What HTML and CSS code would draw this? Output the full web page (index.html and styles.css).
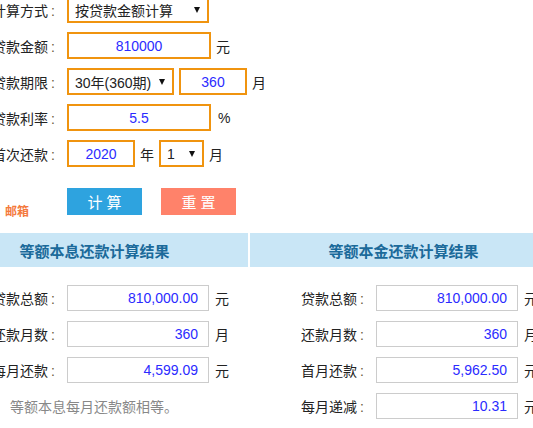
FILE: index.html
```html
<!DOCTYPE html>
<html lang="zh-CN">
<head>
<meta charset="utf-8">
<title>房贷计算器</title>
<link rel="stylesheet" href="styles.css">
</head>
<body>
<div class="page">
  <div class="form">
    <div class="row">
      <span class="label">计算方式<span class="colon">:</span></span>
      <div class="ctl sel w142"><span class="sel-text">按贷款金额计算</span><span class="arrow"></span></div>
    </div>
    <div class="row">
      <span class="label">贷款金额<span class="colon">:</span></span>
      <div class="ctl inp w144">810000</div>
      <span class="unit">元</span>
    </div>
    <div class="row">
      <span class="label">贷款期限<span class="colon">:</span></span>
      <div class="ctl sel w107"><span class="sel-text">30年(360期)</span><span class="arrow"></span></div>
      <div class="ctl inp w68">360</div>
      <span class="unit">月</span>
    </div>
    <div class="row">
      <span class="label">贷款利率<span class="colon">:</span></span>
      <div class="ctl inp w144">5.5</div>
      <span class="unit pct">%</span>
    </div>
    <div class="row">
      <span class="label">首次还款<span class="colon">:</span></span>
      <div class="ctl inp w68">2020</div>
      <span class="unit">年</span>
      <div class="ctl sel w45"><span class="sel-text">1</span><span class="arrow"></span></div>
      <span class="unit">月</span>
    </div>
    <div class="btn-row">
      <span class="mail">邮箱</span>
      <button class="btn btn-calc">计 算</button>
      <button class="btn btn-reset">重 置</button>
    </div>
  </div>

  <div class="results">
    <div class="col">
      <div class="col-head">等额本息还款计算结果</div>
      <div class="rrow">
        <span class="label">贷款总额<span class="colon">:</span></span>
        <div class="out">810,000.00</div>
        <span class="unit">元</span>
      </div>
      <div class="rrow">
        <span class="label">还款月数<span class="colon">:</span></span>
        <div class="out">360</div>
        <span class="unit">月</span>
      </div>
      <div class="rrow">
        <span class="label">每月还款<span class="colon">:</span></span>
        <div class="out">4,599.09</div>
        <span class="unit">元</span>
      </div>
      <div class="note">等额本息每月还款额相等。</div>
    </div>
    <div class="col">
      <div class="col-head">等额本金还款计算结果</div>
      <div class="rrow">
        <span class="label">贷款总额<span class="colon">:</span></span>
        <div class="out">810,000.00</div>
        <span class="unit">元</span>
      </div>
      <div class="rrow">
        <span class="label">还款月数<span class="colon">:</span></span>
        <div class="out">360</div>
        <span class="unit">月</span>
      </div>
      <div class="rrow">
        <span class="label">首月还款<span class="colon">:</span></span>
        <div class="out">5,962.50</div>
        <span class="unit">元</span>
      </div>
      <div class="rrow">
        <span class="label">每月递减<span class="colon">:</span></span>
        <div class="out">10.31</div>
        <span class="unit">元</span>
      </div>
    </div>
  </div>
</div>
</body>
</html>
```

FILE: styles.css
```css
html, body {
  margin: 0;
  padding: 0;
  background: #fff;
  overflow: hidden;
}
body {
  font-family: "Liberation Sans", "Noto Sans CJK SC", sans-serif;
  font-size: 14px;
  color: #222;
}
.page {
  margin-left: -59px;
  margin-top: -4px;
  width: 616px;
}
.form {
  display: flex;
  flex-direction: column;
  gap: 9px;
}
.row, .rrow {
  display: flex;
  align-items: center;
  gap: 5px;
}
.row { height: 27px; }
.label {
  width: 114px;
  text-align: right;
  margin-right: 7px;
  white-space: nowrap;
  color: #222;
}
.colon {
  margin-left: 3px;
  color: #6a5a3a;
}
.ctl {
  box-sizing: border-box;
  height: 27px;
  border: 2px solid #f0940f;
  display: flex;
  align-items: center;
}
.inp {
  justify-content: center;
  color: #2b2bff;
}
.sel {
  padding: 0 7px 0 6px;
  justify-content: space-between;
  color: #222;
}
.arrow {
  width: 0;
  height: 0;
  border-left: 3.5px solid transparent;
  border-right: 3.5px solid transparent;
  border-top: 6px solid #111;
}
.w142 { width: 142px; }
.w144 { width: 144px; }
.w107 { width: 107px; }
.w68 { width: 68px; }
.w45 { width: 45px; }
.unit { color: #222; }
.pct { margin-left: 2px; }
.btn-row {
  position: relative;
  display: flex;
  gap: 19px;
  padding-left: 126px;
  margin-top: 12px;
}
.mail {
  position: absolute;
  left: 64px;
  top: 14px;
  font-size: 12px;
  font-weight: bold;
  color: #f47a3d;
}
.btn {
  width: 75px;
  height: 27px;
  border: none;
  padding: 0;
  color: #fff;
  font-family: "Liberation Sans", "Noto Sans CJK SC", sans-serif;
  font-size: 15px;
}
.btn-calc { background: #2ea3df; }
.btn-reset { background: #ff826a; }
.results {
  display: flex;
  gap: 2px;
  margin-top: 18px;
}
.col {
  width: 307px;
  display: flex;
  flex-direction: column;
  gap: 10px;
}
.col-head {
  height: 34px;
  background: #c9e6f6;
  color: #1b6a9a;
  font-weight: bold;
  font-size: 15px;
  display: flex;
  align-items: center;
  justify-content: center;
  margin-bottom: 8px;
}
.rrow { height: 26px; }
.out {
  box-sizing: border-box;
  width: 142px;
  height: 26px;
  border: 1px solid #ccc;
  padding-right: 10px;
  display: flex;
  align-items: center;
  justify-content: flex-end;
  color: #2b2bff;
}
.rrow .unit { margin-left: 1px; }
.note {
  height: 26px;
  display: flex;
  align-items: center;
  padding-left: 69px;
  color: #888;
}
```
